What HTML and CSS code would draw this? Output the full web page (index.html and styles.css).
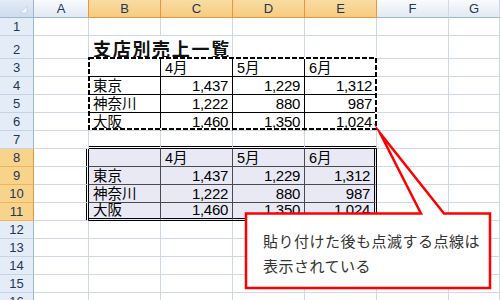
FILE: index.html
```html
<!DOCTYPE html>
<html lang="ja">
<head>
<meta charset="utf-8">
<title>支店別売上一覧</title>
<link rel="stylesheet" href="styles.css">
</head>
<body>
<div class="sheet">
  <div class="corner"><svg class="tri" width="8" height="8" viewBox="0 0 8 8"><path d="M7 0 V7 H0 Z" fill="#f4f6f9" stroke="#b9c6d6" stroke-width="0.6"/></svg></div>
  <div class="ch pre">A</div>
  <div class="ch sel">B</div>
  <div class="ch sel">C</div>
  <div class="ch sel">D</div>
  <div class="ch sel">E</div>
  <div class="ch">F</div>
  <div class="ch">G</div>

  <div class="rh">1</div>
  <div class="c"></div><div class="c"></div><div class="c"></div><div class="c"></div><div class="c"></div><div class="c"></div><div class="c"></div>

  <div class="rh">2</div>
  <div class="c"></div>
  <div class="c title nr"><span>支店別売上一覧</span></div>
  <div class="c"></div><div class="c"></div><div class="c"></div><div class="c"></div><div class="c"></div>

  <div class="rh">3</div>
  <div class="c"></div>
  <div class="c kr kb"></div>
  <div class="c kr kb">4月</div>
  <div class="c kr kb">5月</div>
  <div class="c kb">6月</div>
  <div class="c"></div><div class="c"></div>

  <div class="rh">4</div>
  <div class="c"></div>
  <div class="c kr kb">東京</div>
  <div class="c n kr kb">1,437</div>
  <div class="c n kr kb">1,229</div>
  <div class="c n kb">1,312</div>
  <div class="c"></div><div class="c"></div>

  <div class="rh">5</div>
  <div class="c"></div>
  <div class="c kr kb">神奈川</div>
  <div class="c n kr kb">1,222</div>
  <div class="c n kr kb">880</div>
  <div class="c n kb">987</div>
  <div class="c"></div><div class="c"></div>

  <div class="rh">6</div>
  <div class="c"></div>
  <div class="c kr">大阪</div>
  <div class="c n kr">1,460</div>
  <div class="c n kr">1,350</div>
  <div class="c n">1,024</div>
  <div class="c"></div><div class="c"></div>

  <div class="rh">7</div>
  <div class="c"></div>
  <div class="c db"></div><div class="c db"></div><div class="c db"></div><div class="c db"></div>
  <div class="c"></div><div class="c"></div>

  <div class="rh hl">8</div>
  <div class="c dr"></div>
  <div class="c t2 gr gb"></div>
  <div class="c t2 gr gb">4月</div>
  <div class="c t2 gr gb">5月</div>
  <div class="c t2 gb dr">6月</div>
  <div class="c"></div><div class="c"></div>

  <div class="rh hl">9</div>
  <div class="c dr"></div>
  <div class="c t2 gr gb">東京</div>
  <div class="c t2 n gr gb">1,437</div>
  <div class="c t2 n gr gb">1,229</div>
  <div class="c t2 n gb dr">1,312</div>
  <div class="c"></div><div class="c"></div>

  <div class="rh hl">10</div>
  <div class="c dr"></div>
  <div class="c t2 gr gb">神奈川</div>
  <div class="c t2 n gr gb">1,222</div>
  <div class="c t2 n gr gb">880</div>
  <div class="c t2 n gb dr">987</div>
  <div class="c"></div><div class="c"></div>

  <div class="rh hl">11</div>
  <div class="c dr"></div>
  <div class="c t2 gr db">大阪</div>
  <div class="c t2 n gr db">1,460</div>
  <div class="c t2 n gr db">1,350</div>
  <div class="c t2 n db dr">1,024</div>
  <div class="c"></div><div class="c"></div>

  <div class="rh">12</div>
  <div class="c"></div><div class="c"></div><div class="c"></div><div class="c"></div><div class="c"></div><div class="c"></div><div class="c"></div>
  <div class="rh">13</div>
  <div class="c"></div><div class="c"></div><div class="c"></div><div class="c"></div><div class="c"></div><div class="c"></div><div class="c"></div>
  <div class="rh">14</div>
  <div class="c"></div><div class="c"></div><div class="c"></div><div class="c"></div><div class="c"></div><div class="c"></div><div class="c"></div>
  <div class="rh">15</div>
  <div class="c"></div><div class="c"></div><div class="c"></div><div class="c"></div><div class="c"></div><div class="c"></div><div class="c"></div>
  <div class="rh">16</div>
  <div class="c"></div><div class="c"></div><div class="c"></div><div class="c"></div><div class="c"></div><div class="c"></div><div class="c"></div>

  <svg class="overlay" width="500" height="300" viewBox="0 0 500 300">
    <rect x="89" y="58" width="287" height="71" fill="none" stroke="#ffffff" stroke-width="2"/>
    <rect x="89" y="58" width="287" height="71" fill="none" stroke="#000000" stroke-width="2" stroke-dasharray="5 2"/>
    <path d="M246 213.5 H421 L380 133 L444 213.5 H490 V288 H246 Z" fill="#ffffff" stroke="#ff0000" stroke-width="2.5" stroke-miterlimit="12"/>
  </svg>
  <div class="note">貼り付けた後も点滅する点線は<br>表示されている</div>
</div>
</body>
</html>
```

FILE: styles.css
```css
html, body {
  margin: 0;
  padding: 0;
  background: #ffffff;
}

.sheet {
  position: relative;
  width: 500px;
  height: 300px;
  overflow: hidden;
  display: grid;
  grid-template-columns: 34px 55px repeat(5, 72px) 51px;
  grid-template-rows: 18px 18px 23px repeat(14, 18px);
  font-family: "Liberation Sans", "Noto Sans CJK JP", sans-serif;
}

.corner {
  box-sizing: border-box;
  background: linear-gradient(#e3ebf6, #cddcef);
  border-right: 1px solid #9eb6ce;
  border-bottom: 1px solid #9eb6ce;
  display: flex;
  justify-content: flex-end;
  align-items: flex-end;
  padding: 0 5px 3px 0;
}

.tri {
  display: block;
}

.ch {
  box-sizing: border-box;
  background: linear-gradient(#f9fbfd, #e2e9f3);
  border-right: 1px solid #d0dae6;
  border-bottom: 1px solid #9eb6ce;
  color: #1f3656;
  font-size: 13px;
  line-height: 16px;
  display: flex;
  justify-content: center;
  align-items: center;
}

.ch.pre {
  border-right-color: #f29436;
}

.ch.sel {
  background: linear-gradient(#f9dca3, #f6cc7f);
  border-right-color: #f29436;
  border-bottom-color: #f29436;
}

.rh {
  box-sizing: border-box;
  background: #e4ecf7;
  border-right: 1px solid #9eb6ce;
  border-bottom: 1px solid #c5d3e4;
  color: #1f3656;
  font-size: 13px;
  line-height: 16px;
  display: flex;
  justify-content: center;
  align-items: flex-end;
}

.rh.hl {
  background: #f8d38c;
  border-right-color: #f29436;
  border-bottom-color: #f3b35c;
}

.c {
  box-sizing: border-box;
  min-width: 0;
  border-right: 1px solid #d0d7e5;
  border-bottom: 1px solid #d0d7e5;
  padding: 0 3px 0 4px;
  font-size: 14.5px;
  line-height: 16px;
  color: #000000;
  white-space: nowrap;
  display: flex;
  align-items: flex-end;
}

.c.n {
  justify-content: flex-end;
  padding-right: 4px;
  font-size: 15px;
  letter-spacing: -0.3px;
}

.c.title {
  overflow: visible;
  position: relative;
  z-index: 1;
}

.c.title span {
  font-family: "Noto Sans CJK JP", sans-serif;
  font-weight: bold;
  font-size: 18px;
  letter-spacing: 1.7px;
  line-height: 20px;
  color: #111111;
}

.c.nr {
  border-right-color: transparent;
}

.c.kr {
  border-right-color: #000000;
}

.c.kb {
  border-bottom-color: #000000;
}

.c.t2 {
  background: #e8e9f4;
}

.c.gr {
  border-right-color: #4a4a4a;
}

.c.gb {
  border-bottom-color: #4a4a4a;
}

.c.dr {
  border-right: 3px double #000000;
}

.c.db {
  border-bottom: 3px double #000000;
}

.overlay {
  position: absolute;
  left: 0;
  top: 0;
  pointer-events: none;
  z-index: 2;
}

.note {
  position: absolute;
  left: 263px;
  top: 228px;
  z-index: 3;
  font-family: "Noto Sans CJK JP", sans-serif;
  font-size: 15px;
  line-height: 25px;
  letter-spacing: 0.5px;
  color: #333333;
  white-space: nowrap;
}
```
